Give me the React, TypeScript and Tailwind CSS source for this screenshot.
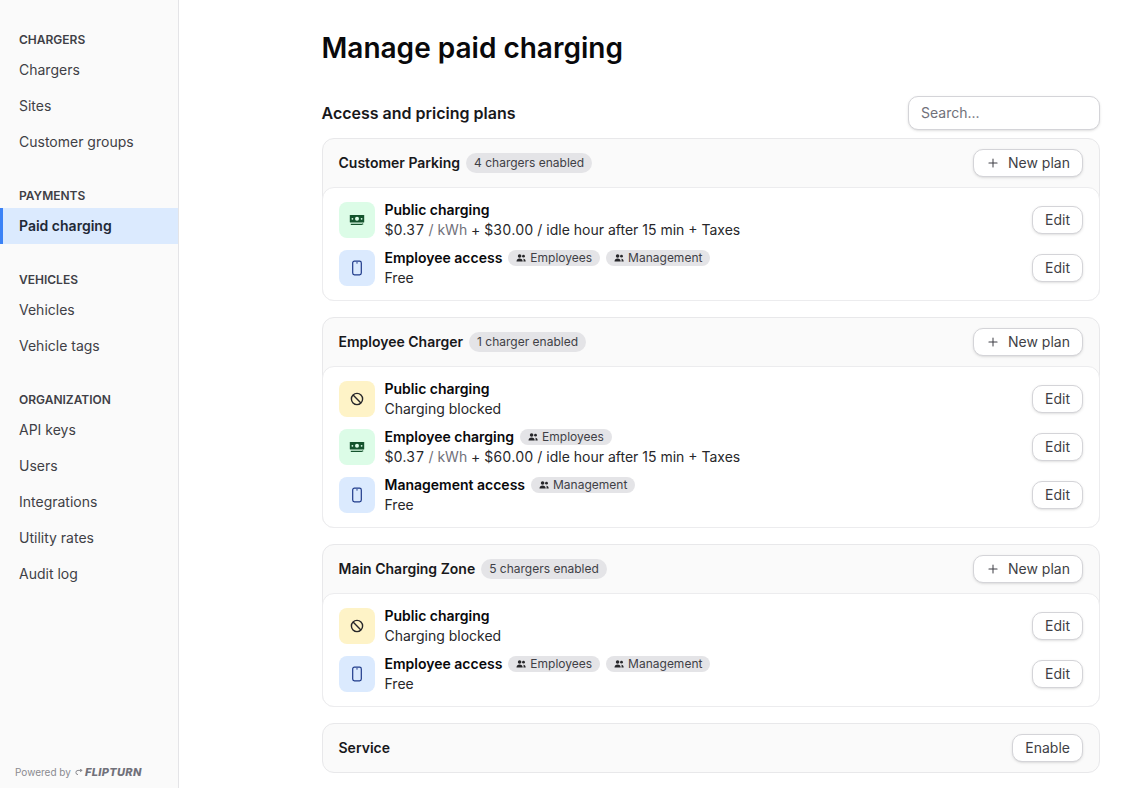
import { Plus } from "lucide-react";

const nav = [
  { title: "CHARGERS", items: ["Chargers", "Sites", "Customer groups"] },
  { title: "PAYMENTS", items: ["Paid charging"] },
  { title: "VEHICLES", items: ["Vehicles", "Vehicle tags"] },
  { title: "ORGANIZATION", items: ["API keys", "Users", "Integrations", "Utility rates", "Audit log"] },
];

const MoneyIcon = () => (
  <svg width="16" height="16" viewBox="0 0 16 16" fill="none">
    <rect x="0.8" y="3" width="14.4" height="7.6" rx="0.6" fill="#14532d" />
    <circle cx="8" cy="6.8" r="2" fill="#dcfce7" />
    <circle cx="3.4" cy="6.8" r="0.9" fill="#dcfce7" />
    <circle cx="12.6" cy="6.8" r="0.9" fill="#dcfce7" />
    <path d="M1.8 12.4h10.7l1.7-.7" stroke="#14532d" strokeWidth="1.1" />
  </svg>
);

const PhoneIcon = () => (
  <svg width="16" height="16" viewBox="0 0 16 16" fill="none">
    <rect x="3.7" y="1.2" width="8.6" height="13.6" rx="1.7" stroke="#1e3a8a" strokeWidth="1.2" />
    <path d="M7 2.9h2" stroke="#1e3a8a" strokeWidth="0.8" />
  </svg>
);

const BlockedIcon = () => (
  <svg width="16" height="16" viewBox="0 0 16 16" fill="none">
    <circle cx="8" cy="8" r="5.6" stroke="#27272a" strokeWidth="1.4" />
    <path d="M4.1 4.1l7.8 7.8" stroke="#27272a" strokeWidth="1.4" />
  </svg>
);

const UsersIcon = () => (
  <svg width="10" height="10" viewBox="0 0 10 10" fill="#27272a">
    <circle cx="3.6" cy="3" r="1.8" />
    <path d="M.5 8.6c0-2 1.3-3 3.1-3s3.1 1 3.1 3z" />
    <circle cx="7.5" cy="3.2" r="1.4" />
    <path d="M7.3 8.6h2.4c0-1.7-.8-2.8-2.5-2.9.5.8.7 1.7.1 2.9z" />
  </svg>
);

const icons: any = {
  money: { box: "bg-[#dcfce7]", el: <MoneyIcon /> },
  phone: { box: "bg-[#dbeafe]", el: <PhoneIcon /> },
  blocked: { box: "bg-[#fef3c7]", el: <BlockedIcon /> },
};

const Price = ({ kwh, idle }: { kwh: string; idle: string }) => (
  <>
    <span className="tabular-nums">{kwh}</span> <span className="text-[#71717a]">/ kWh</span> +{" "}
    <span className="tabular-nums">{idle}</span> / idle hour after 15 min + Taxes
  </>
);

const Plan = ({ icon, name, tags = [], children }: any) => (
  <div className="flex items-center h-9">
    <div className={`w-9 h-9 rounded-lg flex items-center justify-center shrink-0 ${icons[icon].box}`}>
      {icons[icon].el}
    </div>
    <div className="ml-[10px] flex-1 min-w-0">
      <div className="flex items-center gap-[6px] h-5">
        <span className="text-sm font-semibold text-[#09090b]">{name}</span>
        {tags.map((t: string) => (
          <span key={t} className="flex items-center gap-1 h-4 px-2 rounded-full bg-[#e4e4e7] text-xs text-[#3f3f46]">
            <UsersIcon /> {t}
          </span>
        ))}
      </div>
      <div className="text-sm leading-5 text-[#27272a]">{children}</div>
    </div>
    <button className="h-7 px-3 rounded-[10px] border border-[#d4d4d8] bg-white text-sm text-[#3f3f46] shadow-sm">
      Edit
    </button>
  </div>
);

const Card = ({ name, count, children }: any) => (
  <section className="rounded-xl border border-[#e8e8ea] bg-[#fafafa]">
    <div className="flex items-center h-12 px-4">
      <span className="text-sm font-semibold text-[#18181b]">{name}</span>
      <span className="ml-[6px] h-5 px-2 flex items-center rounded-full bg-[#e4e4e7] text-xs text-[#3f3f46]">{count}</span>
      <button className="ml-auto h-7 w-[110px] flex items-center justify-center gap-2 rounded-[10px] border border-[#d4d4d8] bg-white text-sm text-[#3f3f46] shadow-sm">
        <Plus size={14} strokeWidth={1.75} /> New plan
      </button>
    </div>
    <div className="flex flex-col gap-3 px-4 py-[14px] bg-white rounded-xl border border-[#ececee] -mx-px -mb-px">
      {children}
    </div>
  </section>
);

export default function App() {
  return (
    <div className="flex h-[788px] overflow-hidden bg-white font-['Inter',sans-serif]">
      <aside className="w-[179px] shrink-0 flex flex-col bg-[#fafafa] border-r border-[#e4e4e7] pt-[30px]">
        <nav className="flex flex-col gap-[26px]">
          {nav.map((g) => (
            <div key={g.title}>
              <div className="px-[19px] mb-1 pt-px text-xs leading-[17px] font-semibold text-[#3f3f46]">{g.title}</div>
              {g.items.map((item) =>
                item === "Paid charging" ? (
                  <div key={item} className="h-9 pl-4 flex items-center border-l-[3px] border-[#3b82f6] bg-[#dbeafe] text-sm font-semibold text-[#1f2937]">
                    {item}
                  </div>
                ) : (
                  <div key={item} className="h-9 px-[19px] flex items-center text-sm text-[#3f3f46]">{item}</div>
                )
              )}
            </div>
          ))}
        </nav>
        <div className="mt-auto mb-[9px] pl-[15px] flex items-center text-[10px] leading-[14px] text-[#8a8a90]">
          Powered by
          <svg width="8" height="7" viewBox="0 0 8 7" fill="none" className="ml-1 mr-[2px]">
            <path d="M7 1.4H3a2.1 2.1 0 0 0 0 4.2M5 .3 7.2 1.4 5 2.6" stroke="#8a8a90" strokeWidth="1" />
          </svg>
          <span className="text-[11px] font-extrabold italic tracking-[0.03em] text-[#71717a]">FLIPTURN</span>
        </div>
      </aside>

      <main className="flex-1 pl-[142.5px] pr-[22px]">
        <h1 className="mt-[30px] h-9 leading-9 text-[28px] font-semibold text-[#09090b]">Manage paid charging</h1>
        <div className="mt-[30px] flex items-center justify-between h-[34px]">
          <h2 className="text-base font-semibold text-[#18181b]">Access and pricing plans</h2>
          <input
            placeholder="Search..."
            className="w-[192px] h-[34px] px-3 pb-[2px] rounded-[10px] border border-[#d4d4d8] bg-white text-sm placeholder:text-[#71717a] shadow-sm outline-none"
          />
        </div>
        <div className="mt-2 flex flex-col gap-4">
          <Card name="Customer Parking" count="4 chargers enabled">
            <Plan icon="money" name="Public charging"><Price kwh="$0.37" idle="$30.00" /></Plan>
            <Plan icon="phone" name="Employee access" tags={["Employees", "Management"]}>Free</Plan>
          </Card>
          <Card name="Employee Charger" count="1 charger enabled">
            <Plan icon="blocked" name="Public charging">Charging blocked</Plan>
            <Plan icon="money" name="Employee charging" tags={["Employees"]}><Price kwh="$0.37" idle="$60.00" /></Plan>
            <Plan icon="phone" name="Management access" tags={["Management"]}>Free</Plan>
          </Card>
          <Card name="Main Charging Zone" count="5 chargers enabled">
            <Plan icon="blocked" name="Public charging">Charging blocked</Plan>
            <Plan icon="phone" name="Employee access" tags={["Employees", "Management"]}>Free</Plan>
          </Card>
          <section className="rounded-xl border border-[#e8e8ea] bg-[#fafafa] h-[50px] flex items-center px-4">
            <span className="text-sm font-semibold text-[#18181b]">Service</span>
            <button className="ml-auto h-7 px-3 rounded-[10px] border border-[#d4d4d8] bg-white text-sm text-[#3f3f46] shadow-sm">
              Enable
            </button>
          </section>
        </div>
      </main>
    </div>
  );
}
